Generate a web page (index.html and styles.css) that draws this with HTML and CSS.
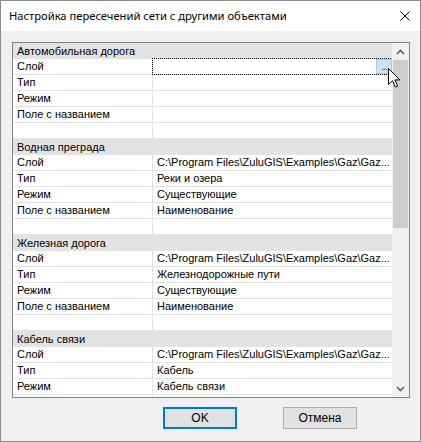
FILE: index.html
```html
<!DOCTYPE html>
<html lang="ru">
<head>
  <meta charset="UTF-8" />
  <title>Настройка пересечений сети с другими объектами</title>
  <link rel="stylesheet" href="styles.css">
</head>
<body>

<div class="window">
  <!-- Title bar -->
  <div class="titlebar">
    <span class="title">Настройка пересечений сети с другими объектами</span>
    <svg class="close" width="10" height="10" viewBox="0 0 10 10">
      <path d="M0.5 0.5 L9.5 9.5 M9.5 0.5 L0.5 9.5" stroke="#000" stroke-width="1" fill="none" />
    </svg>
  </div>

  <div class="client">
    <!-- Property grid -->
    <div class="grid">
      <div class="rows">
        <div class="cat">Автомобильная дорога</div>
        <div class="row"><div class="name">Слой</div><div class="value focused"><span class="dots-btn">...</span></div></div>
        <div class="row"><div class="name">Тип</div><div class="value"></div></div>
        <div class="row"><div class="name">Режим</div><div class="value"></div></div>
        <div class="row"><div class="name">Поле с названием</div><div class="value"></div></div>
        <div class="row"><div class="name"></div><div class="value"></div></div>

        <div class="cat">Водная преграда</div>
        <div class="row"><div class="name">Слой</div><div class="value">C:\Program Files\ZuluGIS\Examples\Gaz\Gaz...</div></div>
        <div class="row"><div class="name">Тип</div><div class="value">Реки и озера</div></div>
        <div class="row"><div class="name">Режим</div><div class="value">Существующие</div></div>
        <div class="row"><div class="name">Поле с названием</div><div class="value">Наименование</div></div>
        <div class="row"><div class="name"></div><div class="value"></div></div>

        <div class="cat">Железная дорога</div>
        <div class="row"><div class="name">Слой</div><div class="value">C:\Program Files\ZuluGIS\Examples\Gaz\Gaz...</div></div>
        <div class="row"><div class="name">Тип</div><div class="value">Железнодорожные пути</div></div>
        <div class="row"><div class="name">Режим</div><div class="value">Существующие</div></div>
        <div class="row"><div class="name">Поле с названием</div><div class="value">Наименование</div></div>
        <div class="row"><div class="name"></div><div class="value"></div></div>

        <div class="cat">Кабель связи</div>
        <div class="row"><div class="name">Слой</div><div class="value">C:\Program Files\ZuluGIS\Examples\Gaz\Gaz...</div></div>
        <div class="row"><div class="name">Тип</div><div class="value">Кабель</div></div>
        <div class="row"><div class="name">Режим</div><div class="value">Кабель связи</div></div>
        <div class="row"><div class="name"></div><div class="value"></div></div>
      </div>

      <div class="scrollbar">
        <div class="arrow">
          <svg width="9" height="6" viewBox="0 0 9 6"><path d="M1 5 L4.5 1.5 L8 5" stroke="#606060" stroke-width="1.6" fill="none" /></svg>
        </div>
        <div class="track"><div class="thumb"></div></div>
        <div class="arrow">
          <svg width="9" height="6" viewBox="0 0 9 6"><path d="M1 1 L4.5 4.5 L8 1" stroke="#606060" stroke-width="1.6" fill="none" /></svg>
        </div>
      </div>
    </div>

    <div class="buttons">
      <button class="btn default">OK</button>
      <button class="btn">Отмена</button>
    </div>
  </div>

  <!-- Mouse pointer over the "..." button -->
  <svg class="cursor" width="13" height="20" viewBox="0 0 13 20">
    <path d="M0.5 0.5 L0.5 16.5 L4.5 12.8 L7.3 19 L9.6 18 L6.9 11.9 L11.8 11.9 Z" fill="#fff" stroke="#000" stroke-width="1" stroke-linejoin="miter" />
  </svg>
</div>

</body>
</html>
```

FILE: styles.css
```css
* {
  box-sizing: border-box;
}

body {
  margin: 0;
  background: #f0f0f0;
  font-family: 'Liberation Sans', Arial, sans-serif;
}

.window {
  position: relative;
  width: 421px;
  height: 442px;
  border: 1px solid #8c8c8c;
  background: #f0f0f0;
  display: flex;
  flex-direction: column;
}

/* Title bar */
.titlebar {
  height: 30px;
  background: #fff;
  display: flex;
  align-items: center;
  justify-content: space-between;
  padding: 0 10px 0 8px;
}

.title {
  font-family: 'Noto Sans', sans-serif;
  font-size: 11.2px;
  color: #000;
  margin-top: -1px;
}

.close {
  display: block;
  margin-top: -1px;
}

.client {
  flex: 1;
  padding: 11px 10px 0 11px;
}

/* Property grid */
.grid {
  height: 356px;
  border: 1px solid #828282;
  background: #fff;
  display: flex;
}

.rows {
  flex: 1;
  overflow: hidden;
  font-size: 11px;
  color: #000;
}

.cat {
  height: 16px;
  line-height: 16px;
  padding-left: 4px;
  background: #e3e3e3;
  white-space: nowrap;
}

.row {
  height: 16px;
  display: flex;
  border-bottom: 1px solid #e3e3e3;
}

.name {
  width: 140px;
  flex-shrink: 0;
  padding-left: 4px;
  line-height: 15px;
  border-right: 1px solid #e3e3e3;
  white-space: nowrap;
}

.value {
  flex: 1;
  padding-left: 4px;
  line-height: 15px;
  white-space: nowrap;
  overflow: hidden;
}

.value.focused {
  position: relative;
  outline: 1px dotted #000;
  outline-offset: 0;
}

.dots-btn {
  position: absolute;
  right: 0;
  top: 0;
  width: 16px;
  height: 15px;
  background: #cce4f7;
  border: 1px solid #a6cdee;
  font-size: 10px;
  line-height: 13px;
  text-align: center;
  color: #333;
  letter-spacing: -1px;
}

/* Vertical scrollbar */
.scrollbar {
  width: 17px;
  background: #f0f0f0;
  display: flex;
  flex-direction: column;
}

.arrow {
  height: 17px;
  display: flex;
  align-items: center;
  justify-content: center;
}

.track {
  flex: 1;
  padding: 0 1px;
}

.thumb {
  height: 168px;
  background: #cdcdcd;
}

/* Dialog buttons */
.buttons {
  display: flex;
  gap: 46px;
  padding: 9px 0 0 151px;
}

.btn {
  width: 74px;
  height: 22px;
  background: #e1e1e1;
  border: 1px solid #adadad;
  font-family: 'Liberation Sans', Arial, sans-serif;
  font-size: 12px;
  color: #000;
  padding: 0;
}

.btn.default {
  border: 2px solid #0078d7;
}

.cursor {
  position: absolute;
  left: 387px;
  top: 67px;
}
```
